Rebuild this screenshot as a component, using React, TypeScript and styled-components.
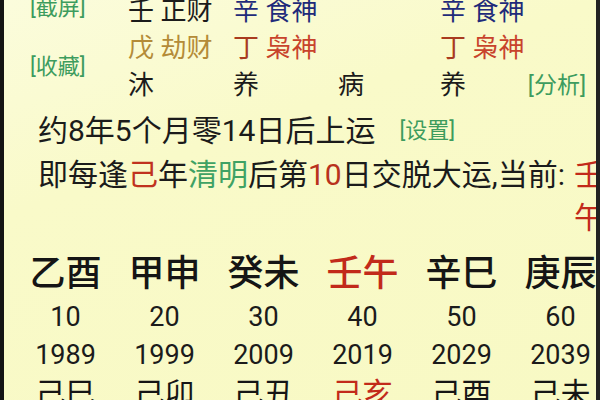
import styled, { createGlobalStyle } from "styled-components";

const Global = createGlobalStyle`
  html, body {
    margin: 0;
    padding: 0;
    background: #f9fac8;
  }
  body {
    font-family: Roboto, "Noto Sans CJK SC", sans-serif;
  }
`;

const Screen = styled.div`
  width: 600px;
  height: 400px;
  box-sizing: border-box;
  overflow: hidden;
  background: linear-gradient(160deg, #fbfcdc 0%, #f9fac9 35%, #f8f9c4 100%);
  border-left: 4px solid #141414;
  border-right: 4px solid #222;
  color: #1b1b1b;
`;

const Chart = styled.div`
  display: grid;
  grid-template-columns: 124px 105px 105px 102px 80px 1fr;
  grid-template-rows: repeat(3, 37px);
  margin-top: -7px;
  font-size: 26px;
  line-height: 37px;
  white-space: nowrap;
`;

const Labels = styled.div`
  grid-column: 1;
  grid-row: 1 / span 3;
  display: flex;
  flex-direction: column;
  gap: 29px;
  padding-left: 26px;
`;

const Link = styled.span<{ $size?: number }>`
  color: #3d9c5e;
  font-size: ${(p) => p.$size ?? 22}px;
  line-height: 30px;
`;

const Row = styled.div`
  grid-column: 2 / -1;
  display: grid;
  grid-template-columns: subgrid;
`;

const Cell = styled.div<{ $color?: string }>`
  color: ${(p) => p.$color ?? "#1b1b1b"};
`;

const Part = styled.span<{ $color: string }>`
  color: ${(p) => p.$color};
`;

const Analyse = styled.div`
  justify-self: end;
  margin-right: 10px;
  display: flex;
  align-items: center;
`;

const Line = styled.div<{ $h: number }>`
  display: flex;
  align-items: flex-start;
  padding-left: 34px;
  font-size: 30px;
  line-height: ${(p) => p.$h}px;
  white-space: nowrap;
`;

const Settings = styled.span`
  margin-left: 24px;
  display: flex;
  align-items: center;
  height: 42px;
`;

const Mark = styled.span<{ $color: string }>`
  color: ${(p) => p.$color};
`;

const Current = styled.span`
  margin-left: 9px;
  width: 30px;
  white-space: normal;
  word-break: break-all;
  color: #c22a1a;
`;

const Luck = styled.div`
  display: grid;
  grid-template-columns: repeat(6, 99px);
  padding-left: 12px;
  margin-top: 13px;
  text-align: center;
  white-space: nowrap;
`;

const Pillar = styled.div<{ $red?: boolean }>`
  font-size: 36px;
  font-weight: 500;
  line-height: 44px;
  color: ${(p) => (p.$red ? "#c22a1a" : "#151515")};
`;

const Num = styled.div<{ $h: number }>`
  font-size: 27px;
  line-height: ${(p) => p.$h}px;
`;

const Branch = styled.div<{ $red?: boolean }>`
  font-size: 30px;
  line-height: 44px;
  color: ${(p) => (p.$red ? "#c22a1a" : "#151515")};
`;

const navy = "#1f2b7a";
const olive = "#b48b38";
const rust = "#a93b1f";
const red = "#c8432b";

const luck = [
  { gz: "乙酉", age: 10, year: 1989, liu: "己巳" },
  { gz: "甲申", age: 20, year: 1999, liu: "己卯" },
  { gz: "癸未", age: 30, year: 2009, liu: "己丑" },
  { gz: "壬午", age: 40, year: 2019, liu: "己亥", current: true },
  { gz: "辛巳", age: 50, year: 2029, liu: "己酉" },
  { gz: "庚辰", age: 60, year: 2039, liu: "己未" },
];

export default function App() {
  return (
    <Screen>
      <Global />
      <Chart>
        <Labels>
          <Link>[截屏]</Link>
          <Link>[收藏]</Link>
        </Labels>
        {/* 天干十神 */}
        <Row>
          <Cell>壬 正财</Cell>
          <Cell $color={navy}>辛 食神</Cell>
          <Cell />
          <Cell $color={navy}>辛 食神</Cell>
        </Row>
        {/* 藏干 */}
        <Row>
          <Cell $color={olive}>戊 劫财</Cell>
          <Cell>
            <Part $color={rust}>丁</Part> <Part $color={red}>枭神</Part>
          </Cell>
          <Cell />
          <Cell>
            <Part $color={rust}>丁</Part> <Part $color={red}>枭神</Part>
          </Cell>
        </Row>
        {/* 长生 */}
        <Row>
          <Cell>沐</Cell>
          <Cell>养</Cell>
          <Cell>病</Cell>
          <Cell>养</Cell>
          <Analyse>
            <Link $size={23}>[分析]</Link>
          </Analyse>
        </Row>
      </Chart>

      <Line $h={42} style={{ marginTop: 6 }}>
        约8年5个月零14日后上运
        <Settings>
          <Link>[设置]</Link>
        </Settings>
      </Line>
      <Line $h={43} style={{ marginTop: 1 }}>
        <span>
          即每逢<Mark $color="#c0321e">己</Mark>年
          <Mark $color="#3fa264">清明</Mark>后第
          <Mark $color="#b8321d">10</Mark>日交脱大运,当前:
        </span>
        <Current>壬午</Current>
      </Line>

      <Luck>
        {luck.map((l) => (
          <Pillar key={l.gz} $red={l.current}>
            {l.gz}
          </Pillar>
        ))}
        {luck.map((l) => (
          <Num key={l.age} $h={42}>
            {l.age}
          </Num>
        ))}
        {luck.map((l) => (
          <Num key={l.year} $h={34}>
            {l.year}
          </Num>
        ))}
        {luck.map((l) => (
          <Branch key={l.liu} $red={l.current}>
            {l.liu}
          </Branch>
        ))}
      </Luck>
    </Screen>
  );
}
